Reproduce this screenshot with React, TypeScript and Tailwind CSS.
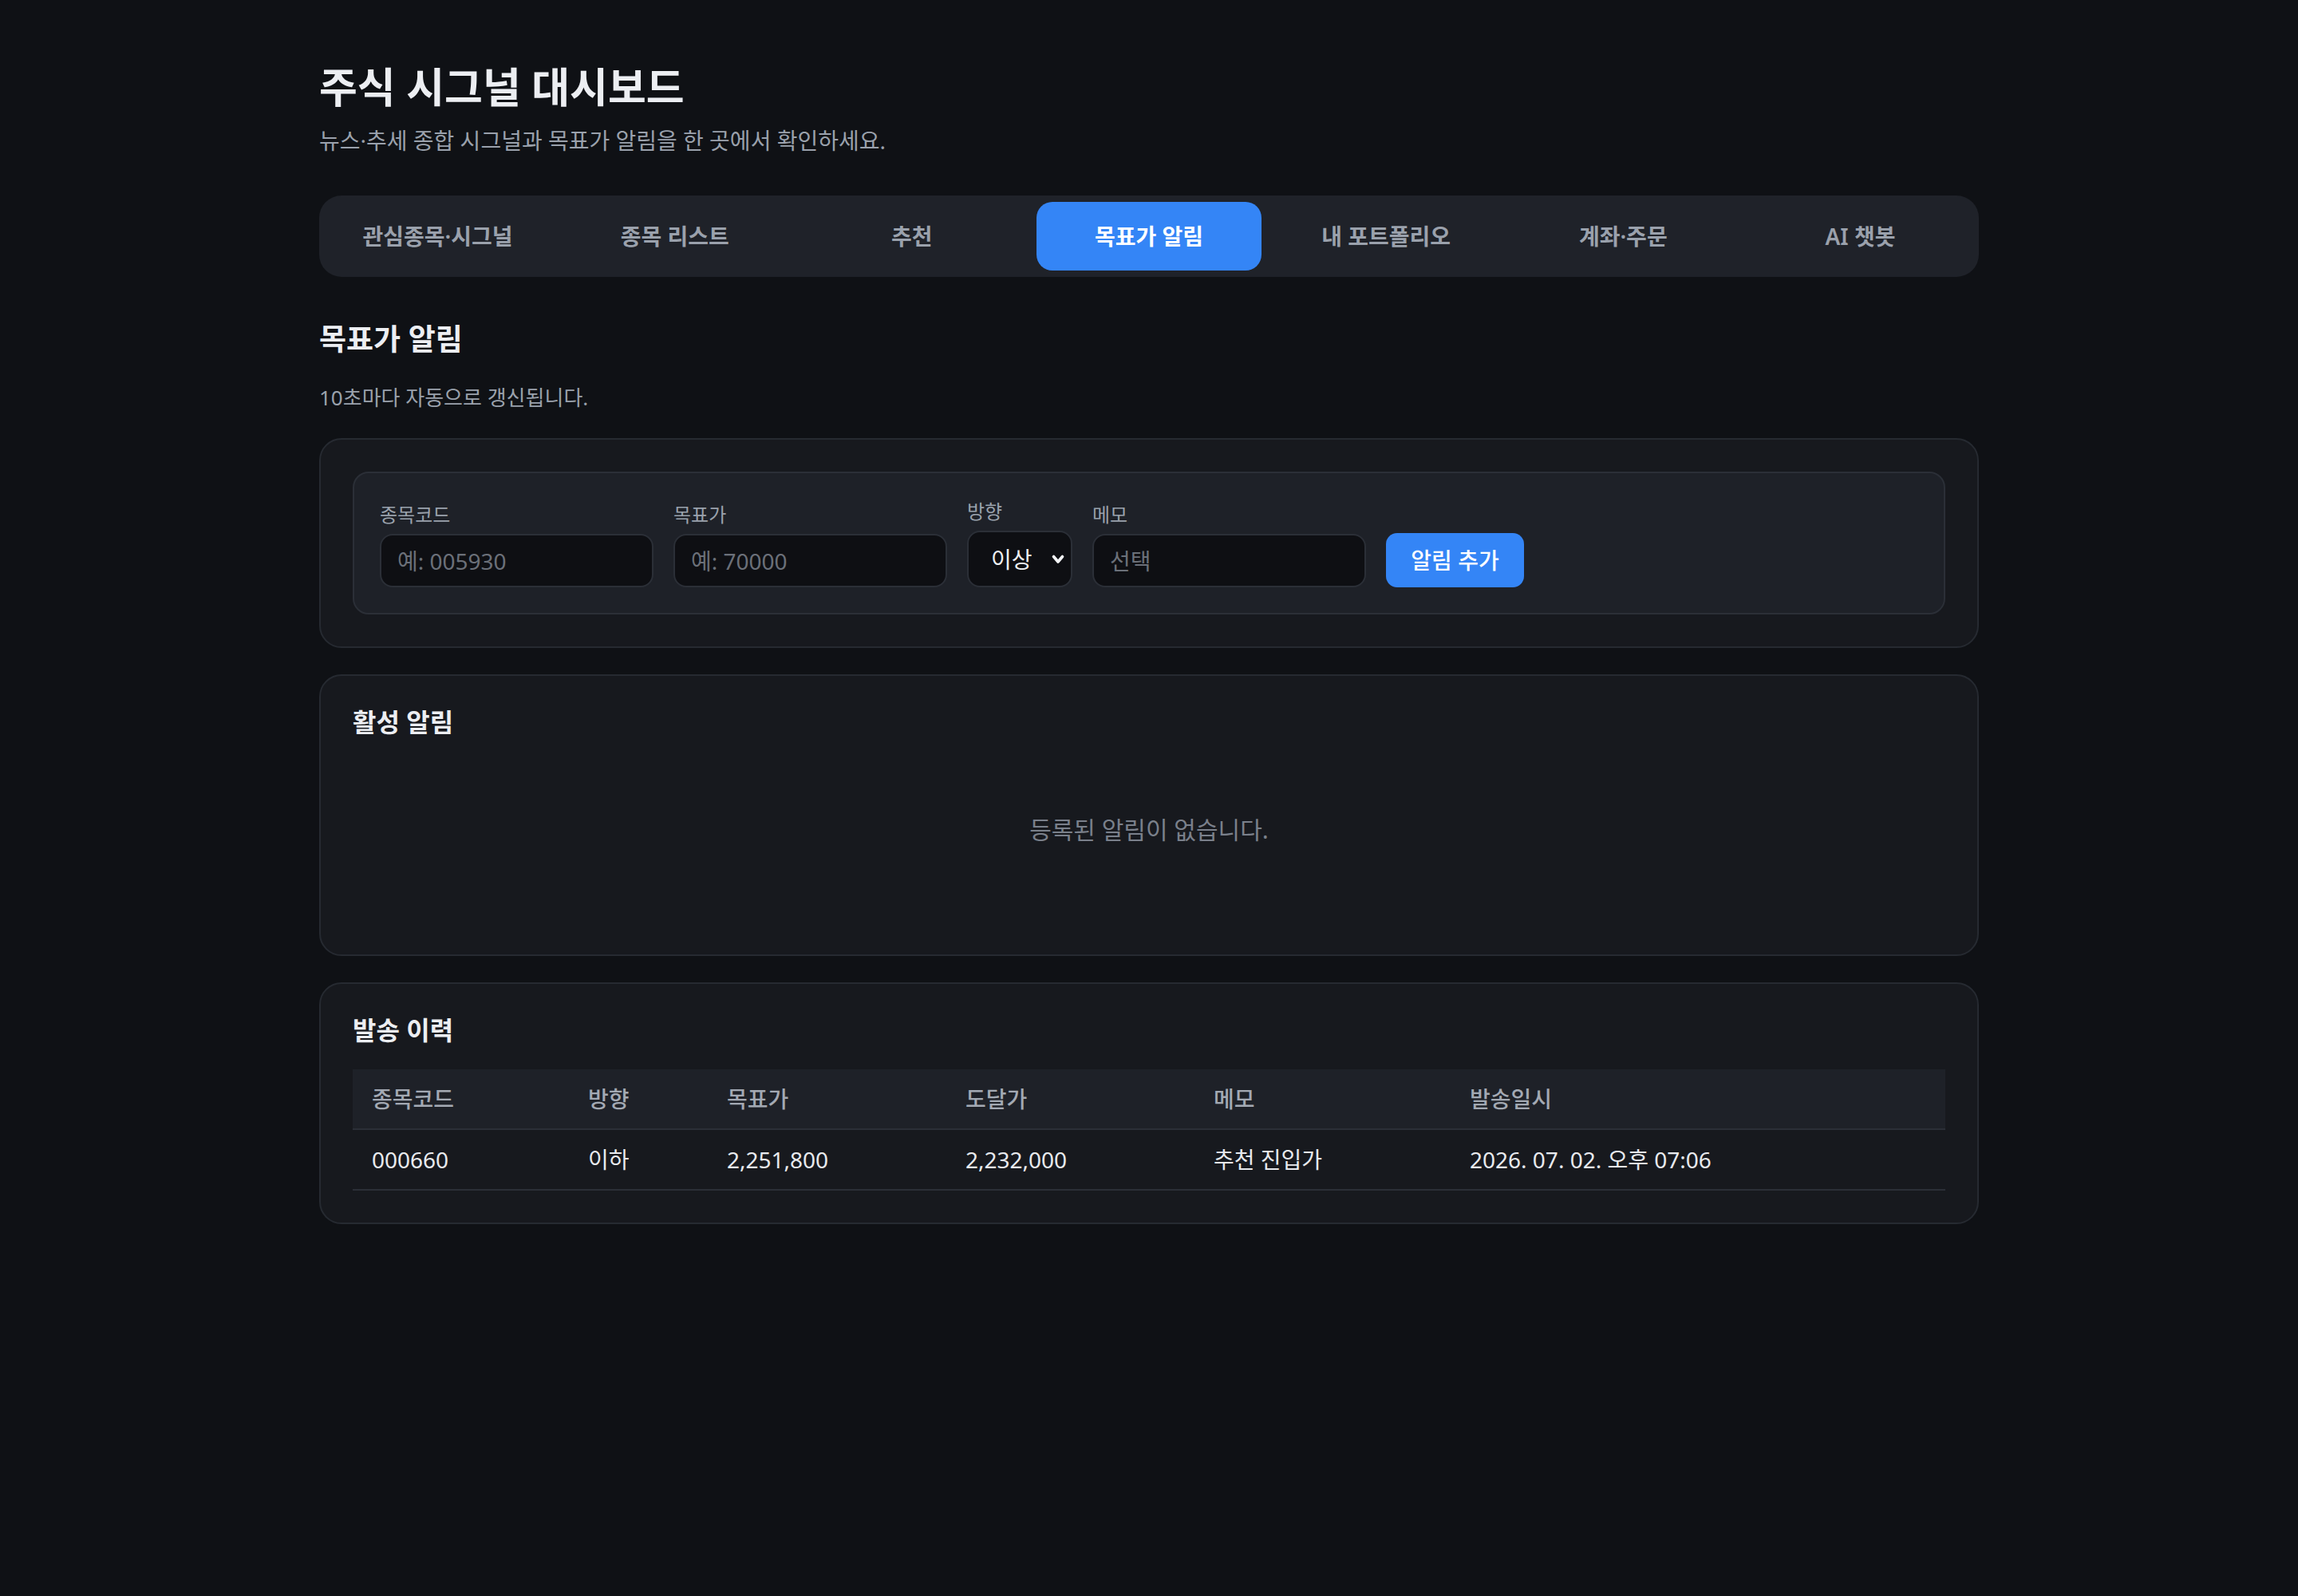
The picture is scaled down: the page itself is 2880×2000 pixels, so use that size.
import React, { useState } from "react";

const TABS = [
	"관심종목·시그널",
	"종목 리스트",
	"추천",
	"목표가 알림",
	"내 포트폴리오",
	"계좌·주문",
	"AI 챗봇",
];

type HistoryRow = {
	code: string;
	direction: string;
	target: string;
	reached: string;
	memo: string;
	sentAt: string;
};

const HISTORY: HistoryRow[] = [
	{
		code: "000660",
		direction: "이하",
		target: "2,251,800",
		reached: "2,232,000",
		memo: "추천 진입가",
		sentAt: "2026. 07. 02. 오후 07:06",
	},
];

const COLUMNS = [
	{ key: "code", label: "종목코드", width: "w-[271px]" },
	{ key: "direction", label: "방향", width: "w-[174px]" },
	{ key: "target", label: "목표가", width: "w-[299px]" },
	{ key: "reached", label: "도달가", width: "w-[311px]" },
	{ key: "memo", label: "메모", width: "w-[321px]" },
	{ key: "sentAt", label: "발송일시", width: "" },
] as const;

const inputClass =
	"h-[67px] w-[343px] rounded-[16px] border-2 border-[#2b2f37] bg-[#0e0f13] px-[20px] text-[28px] text-[#e5e7eb] placeholder:text-[#6b7079] outline-none";

const Field = ({ label, children }: { label: string; children: React.ReactNode }) => (
	<label className="flex flex-col">
		<span className="mb-[8px] text-[24px] leading-[32px] text-[#9aa1ac]">{label}</span>
		{children}
	</label>
);

const Card = ({ children }: { children: React.ReactNode }) => (
	<section className="rounded-[28px] border-2 border-[#262a31] bg-[#17191e] p-[40px]">
		{children}
	</section>
);

export default function App() {
	const [tab, setTab] = useState(3);
	const [direction, setDirection] = useState("above");

	return (
		<div className="min-h-screen bg-[#0f1115] font-['Noto_Sans','Noto_Sans_CJK_KR',sans-serif] text-[#eceef2]">
			<div className="mx-auto w-[2080px] pt-[78px] pb-[80px]">
				<h1 className="text-[52px] font-bold leading-[1.2]">주식 시그널 대시보드</h1>
				<p className="mt-[15px] text-[28px] leading-[42px] text-[#9aa1ac]">
					뉴스·추세 종합 시그널과 목표가 알림을 한 곳에서 확인하세요.
				</p>

				<nav className="mt-[48px] grid grid-cols-7 gap-[16px] rounded-[28px] bg-[#1f2229] p-[8px]">
					{TABS.map((name, i) => (
						<button
							key={name}
							onClick={() => setTab(i)}
							className={
								i === tab
									? "h-[86px] rounded-[20px] bg-[#3485f6] text-[28px] font-semibold text-white"
									: "h-[86px] rounded-[20px] text-[28px] font-semibold text-[#9aa1ac]"
							}>
							{name}
						</button>
					))}
				</nav>

				<h2 className="mt-[50px] text-[37px] font-bold leading-[56px]">목표가 알림</h2>
				<p className="mt-[26px] text-[26px] leading-[39px] text-[#9aa1ac]">10초마다 자동으로 갱신됩니다.</p>

				<div className="mt-[31px] flex flex-col gap-[33px]">
					<Card>
						<form
							onSubmit={(e) => e.preventDefault()}
							className="flex items-end gap-[25px] rounded-[20px] border-2 border-[#2b2f37] bg-[#1e2128] p-[32px]">
							<Field label="종목코드">
								<input className={inputClass} placeholder="예: 005930" />
							</Field>
							<Field label="목표가">
								<input className={inputClass} placeholder="예: 70000" />
							</Field>
							<Field label="방향">
								<div className="relative">
									<select
										value={direction}
										onChange={(e) => setDirection(e.target.value)}
										className="h-[71px] w-[132px] appearance-none rounded-[16px] border-2 border-[#2b2f37] bg-[#0e0f13] pl-[28px] text-[28px] text-[#eef0f3] outline-none">
										<option value="above">이상</option>
										<option value="below">이하</option>
									</select>
									<svg
										className="pointer-events-none absolute right-[10px] top-[29px] h-[14px] w-[16px]"
										viewBox="0 0 16 14"
										fill="none">
										<path d="M2.5 3.5 8 10l5.5-6.5" stroke="#f3f4f6" strokeWidth="3.6" strokeLinecap="round" strokeLinejoin="round" />
									</svg>
								</div>
							</Field>
							<Field label="메모">
								<input className={inputClass} placeholder="선택" />
							</Field>
							<button className="h-[68px] w-[173px] rounded-[14px] bg-[#3485f6] text-[28px] font-medium text-white">
								알림 추가
							</button>
						</form>
					</Card>

					<Card>
						<h3 className="text-[32px] font-bold leading-[36px]">활성 알림</h3>
						<p className="py-[94px] text-center text-[30px] leading-[45px] text-[#7a808b]">등록된 알림이 없습니다.</p>
					</Card>

					<Card>
						<h3 className="mb-[31px] text-[32px] font-bold leading-[36px]">발송 이력</h3>
						<table className="w-full border-collapse text-left text-[28px]">
							<thead>
								<tr className="border-b-2 border-[#2b2f37] bg-[#1e2128]">
									{COLUMNS.map((col) => (
										<th key={col.key} className={`${col.width} px-[24px] py-[16px] font-medium leading-[42px] text-[#a3a9b3]`}>
											{col.label}
										</th>
									))}
								</tr>
							</thead>
							<tbody>
								{HISTORY.map((row) => (
									<tr key={row.code + row.sentAt} className="border-b-2 border-[#2b2f37]">
										{COLUMNS.map((col) => (
											<td key={col.key} className="px-[24px] py-[16px] leading-[42px] text-[#e8eaee]">
												{row[col.key]}
											</td>
										))}
									</tr>
								))}
							</tbody>
						</table>
					</Card>
				</div>
			</div>
		</div>
	);
}
